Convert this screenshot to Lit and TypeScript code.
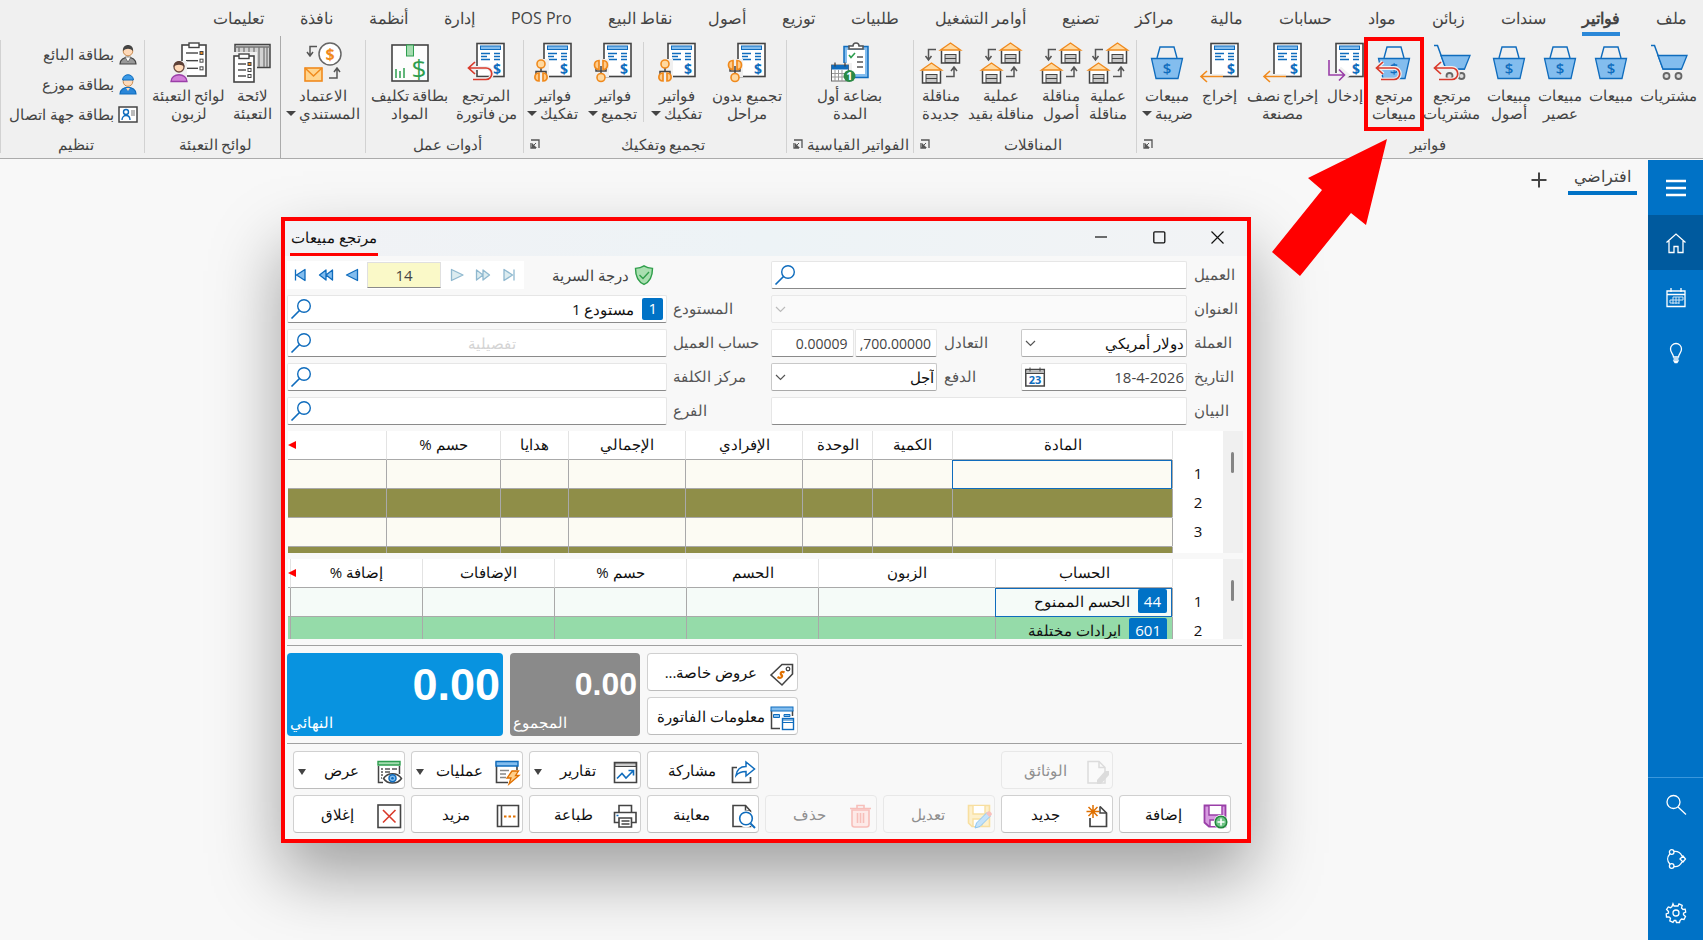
import { LitElement, html, svg, css, nothing, TemplateResult } from "lit";
import { customElement } from "lit/decorators.js";
import { classMap } from "lit/directives/class-map.js";

type Art = ReturnType<typeof svg>;

const BLUE = "#0f6cbd";
const SKY = "#83bdee";
const INK = "#444444";
const GREEN = "#2e9e4f";
const ORANGE = "#f08a1d";
const RED = "#d93a2b";
const PURPLE = "#9a3fa8";

const basket = svg`
  <path d="M10 16 13 5h14l3 11" fill="none" stroke="${BLUE}" stroke-width="1.4"/>
  <path d="M4.500 16.500h31l-4.500 20h-22z" fill="${SKY}" stroke="${BLUE}" stroke-width="1.300"/>
  <text x="20" y="32" font-size="15" font-weight="600" text-anchor="middle" fill="${BLUE}">$</text>`;

const cart = svg`
  <path d="M2 3.500h3.500L14 27h19" fill="none" stroke="${BLUE}" stroke-width="1.500"/>
  <path d="M9 13.500h29L32.500 27H14z" fill="${SKY}" stroke="${BLUE}" stroke-width="1.300"/>
  <circle cx="17.500" cy="34" r="3" fill="#ddd" stroke="#666" stroke-width="1.800"/>
  <circle cx="29.500" cy="34" r="3" fill="#ddd" stroke="#666" stroke-width="1.800"/>`;

const redReturn = svg`
  <path d="M3 26h17a5.500 5.500 0 0 1 0 11.500H7M9 20l-6.500 6L9 32" fill="none" stroke="#f0f0f0" stroke-width="4"/>
  <path d="M3 26h17a5.500 5.500 0 0 1 0 11.500H7M9 20l-6.500 6L9 32" fill="none" stroke="${RED}" stroke-width="1.700"/>`;

const bill = svg`
  <rect x="11" y="1.500" width="27" height="33" fill="#fff" stroke="${INK}" stroke-width="1.600"/>
  <rect x="14.500" y="4" width="20" height="3.500" fill="${SKY}" stroke="${BLUE}"/>
  <path d="M15 11.500h9M15 14.500h6M15 17.500h9M28 11.500h6M28 14.500h6M28 17.500h6" stroke="${BLUE}" stroke-width="1.500"/>
  <text x="31" y="32" font-size="14" font-weight="700" text-anchor="middle" fill="${BLUE}">$</text>`;

const outArrow = svg`
  <path d="M0 35h23M8 29l-6 6 6 6" fill="none" stroke="#f0f0f0" stroke-width="6"/>
  <path d="M1 34.500h22M7 29l-6 5.500 6 5.500" fill="none" stroke="${ORANGE}" stroke-width="1.600"/>`;

const inArrow = svg`
  <path d="M3 17v17h18M14 27l7 6-7 6" fill="none" stroke="#f0f0f0" stroke-width="6"/>
  <path d="M4 18v15h15M14 27.500l5.500 5.500-5.500 5.500" fill="none" stroke="${PURPLE}" stroke-width="1.600"/>`;

const house = (x: number, y: number) => svg`
  <path d="M${x + 1} ${y + 8.500}v12.500h18V${y + 8.500}" fill="#fff" stroke="${INK}" stroke-width="1.500"/>
  <path d="M${x} ${y + 8}l10-7 10 7z" fill="#ffd9a0" stroke="${ORANGE}" stroke-width="1.400"/>
  <rect x="${x + 4.500}" y="${y + 12.500}" width="11" height="8" fill="#c8c8c8" stroke="${INK}"/>
  <path d="M${x + 4.500} ${y + 16.500}h11" stroke="${INK}"/>`;

const transfer = svg`
  ${house(19.500, 0)}${house(0.500, 20)}
  <path d="M15 7.500H7.500V17M4.500 14l3 4 3-4M25 34.500h8V26M30 29l3-4 3 4" fill="none" stroke="#555" stroke-width="1.500"/>`;

const merge = svg`
  <path d="M2 17h14v18H2z" fill="#f0f0f0"/>
  <path d="M8 24v9M3 25v4h10v-4" fill="none" stroke="${INK}" stroke-width="1.500"/>
  <path d="M6 18.500v9c-6 0-6-9 0-9zM10 18.500v9c6 0 6-9 0-9z" fill="#ffcb8a" stroke="${ORANGE}" stroke-width="1.700"/>
  <circle cx="8" cy="35.500" r="4" fill="#ffd9a0" stroke="${ORANGE}" stroke-width="1.600"/>`;

const split = svg`
  <path d="M2 17h14v20H2z" fill="#f0f0f0"/>
  <path d="M8 26v4M3 32v-2.500h10V32" fill="none" stroke="${INK}" stroke-width="1.500"/>
  <circle cx="8" cy="22" r="4" fill="#ffd9a0" stroke="${ORANGE}" stroke-width="1.600"/>
  <path d="M6 31v8c-6 0-5-8 0-8zM10 31v8c6 0 5-8 0-8z" fill="#ffcb8a" stroke="${ORANGE}" stroke-width="1.700"/>`;

const clipCalendar = svg`
  <rect x="14" y="4.500" width="24" height="31" fill="${SKY}" stroke="${BLUE}" stroke-width="1.500"/>
  <rect x="17" y="8" width="18" height="24" fill="#fff"/>
  <path d="M19 7V4h4a3 3 0 0 1 6 0h4v3z" fill="#fff" stroke="#555" stroke-width="1.500"/>
  <path d="m19 13 2 2.500 4-4.500" fill="none" stroke="${GREEN}" stroke-width="1.600"/>
  <path d="M27 15h6M27 20h6M27 25h6" stroke="#555" stroke-width="1.400"/>
  <path d="M0 21h22v19H0z" fill="#f0f0f0"/>
  <rect x="1.500" y="23" width="17" height="16" fill="#fff" stroke="#666"/>
  <rect x="1.500" y="23" width="17" height="4.500" fill="${BLUE}"/>
  <path d="M5 20.500v4M15 20.500v4" stroke="${INK}" stroke-width="1.300"/>
  <path d="M5 28v11M8.500 28v11M12 28v11M2 31.500h16M2 35h16" stroke="#999"/>
  <circle cx="19.500" cy="34" r="6" fill="#2b8a46"/>
  <text x="19.500" y="38" font-size="11" font-weight="700" text-anchor="middle" fill="#fff">1</text>`;

const costCard = svg`
  <rect x="2" y="3" width="36" height="36" fill="#fdfdfd" stroke="${INK}" stroke-width="1.600"/>
  <rect x="16.500" y="3" width="7" height="11" fill="#a5dcb0" stroke="${GREEN}"/>
  <path d="M6 27v9M10 29v7M14 26v10" stroke="${GREEN}" stroke-width="1.500"/>
  <text x="29" y="36" font-size="26" text-anchor="middle" fill="${GREEN}">$</text>`;

const credit = svg`
  <circle cx="27" cy="12" r="11" fill="#fff" stroke="#666" stroke-width="1.500"/>
  <text x="27" y="18" font-size="16" font-weight="700" text-anchor="middle" fill="${ORANGE}">$</text>
  <path d="M14 4.500H7V13M4 10l3 4 3-4M26 36h8v-9M31 30l3-4 3 4" fill="none" stroke="#555" stroke-width="1.500"/>
  <rect x="2" y="26" width="17" height="13" fill="#ffd58f" stroke="${ORANGE}" stroke-width="1.600"/>
  <path d="m2 26 8.500 8 8.500-8" fill="none" stroke="${ORANGE}" stroke-width="1.500"/>`;

const clipboard = (x: number, y: number, w: number, h: number) => svg`
  <rect x="${x}" y="${y + 2}" width="${w}" height="${h}" fill="#fff" stroke="${INK}" stroke-width="1.600"/>
  <rect x="${x + w / 2 - 5}" y="${y}" width="10" height="4.500" fill="#fff" stroke="${INK}" stroke-width="1.400"/>
  ${[0, 1, 2].map((i) => {
    const ly = y + 10 + (i * (h - 8)) / 3;
    return svg`<path d="M${x + 4} ${ly}h${w - 12}" stroke="${INK}" stroke-width="1.400"/>
      <rect x="${x + w - 6}" y="${ly - 1.500}" width="3" height="3" fill="${i ? "#fff" : ORANGE}" stroke="${INK}"/>`;
  })}`;

const packList = svg`
  <rect x="3" y="2.500" width="35" height="23" fill="#d2d2d2" stroke="${INK}" stroke-width="1.500"/>
  <path d="M3 5h35M7 5v20M12 5v20M17 5v20M22 5v20M27 5v20M32 5v20M35 5v20" stroke="#777" stroke-width="1.300"/>
  <path d="M0 10h25v30H0z" fill="#f0f0f0"/>
  ${clipboard(2, 12, 20, 26)}`;

const packPerson = svg`
  ${clipboard(13, 1, 24, 31)}
  <path d="M0 19h18v21H0z" fill="#f0f0f0"/>
  <circle cx="10" cy="25" r="5" fill="#ffd9b8" stroke="#6d4c41" stroke-width="1.300"/>
  <path d="M4.500 25c0-8 11-8 11 0-3-3-8-3-11 0z" fill="#5d4037"/>
  <path d="M2 39.500c0-9 16-9 16 0z" fill="#d27fd8" stroke="${PURPLE}" stroke-width="1.400"/>`;

const seller = svg`
  <path d="M2 20c0-9 16-9 16 0z" fill="#999" stroke="${INK}" stroke-width="1.200"/>
  <path d="m7 13 3 5 3-5z" fill="#fff" stroke="${INK}" stroke-width=".6"/>
  <circle cx="10" cy="7" r="4.800" fill="#ffd9b8" stroke="#c98b50"/>
  <path d="M5 7C4-1 16-1 15 7c-3-3-7-3-10 0z" fill="#444"/>`;

const courier = svg`
  <path d="M2 20c0-9 16-9 16 0z" fill="#2a86d8" stroke="${BLUE}" stroke-width="1.200"/>
  <circle cx="10" cy="7.500" r="4.800" fill="#ffd9b8" stroke="#c98b50"/>
  <path d="M4.500 6C5-1 15-1 15.500 6z" fill="#3c9be8" stroke="${BLUE}"/>
  <path d="m8 14 2 3 2-3z" fill="#ffd9b8"/>`;

const contact = svg`
  <rect x="1" y="3" width="18" height="15" fill="#fff" stroke="${INK}" stroke-width="1.500"/>
  <circle cx="8" cy="8" r="2.500" fill="none" stroke="${BLUE}" stroke-width="1.400"/>
  <path d="M4 16c0-6 8-6 8 0" fill="none" stroke="${BLUE}" stroke-width="1.400"/>
  <path d="M13 6h4v6h-4z" fill="#bbb"/>`;

const pic = (art: Art, size: number, cls = "") =>
  html`<svg class=${cls} width=${size} height=${size} viewBox="0 0 ${size} ${size}" aria-hidden="true">${art}</svg>`;

interface Tool {
  icon: Art;
  lines: string[];
  menu?: boolean;
  marked?: boolean;
  split?: boolean;
}
interface Group {
  key: string;
  label: string;
  launcher?: boolean;
  tools: Tool[];
}

const TABS = ["ملف", "فواتير", "سندات", "زبائن", "مواد", "حسابات", "مالية", "مراكز", "تصنيع", "أوامر التشغيل",
  "طلبيات", "توزيع", "أصول", "نقاط البيع", "POS Pro", "إدارة", "أنظمة", "نافذة", "تعليمات"];

const GROUPS: Group[] = [
  { key: "invoices", label: "فواتير", launcher: true, tools: [
    { icon: cart, lines: ["مشتريات"] },
    { icon: basket, lines: ["مبيعات"] },
    { icon: basket, lines: ["مبيعات", "عصير"] },
    { icon: basket, lines: ["مبيعات", "أصول"] },
    { icon: svg`${cart}${redReturn}`, lines: ["مرتجع", "مشتريات"] },
    { icon: svg`${basket}${redReturn}`, lines: ["مرتجع", "مبيعات"], marked: true },
    { icon: svg`${bill}${inArrow}`, lines: ["إدخال"] },
    { icon: svg`${bill}${outArrow}`, lines: ["إخراج نصف", "مصنعة"] },
    { icon: svg`${bill}${outArrow}`, lines: ["إخراج"] },
    { icon: basket, lines: ["مبيعات", "ضريبة"], menu: true },
  ] },
  { key: "transfers", label: "المناقلات", launcher: true, tools: [
    { icon: transfer, lines: ["عملية", "مناقلة"] },
    { icon: transfer, lines: ["مناقلة", "أصول"] },
    { icon: transfer, lines: ["عملية", "مناقلة بقيد"] },
    { icon: transfer, lines: ["مناقلة", "جديدة"] },
  ] },
  { key: "standard", label: "الفواتير القياسية", launcher: true, tools: [
    { icon: clipCalendar, lines: ["بضاعة أول", "المدة"] },
  ] },
  { key: "assembly", label: "تجميع وتفكيك", launcher: true, tools: [
    { icon: svg`${bill}${merge}`, lines: ["تجميع بدون", "مراحل"] },
    { icon: svg`${bill}${split}`, lines: ["فواتير", "تفكيك"], menu: true },
    { icon: svg`${bill}${merge}`, lines: ["فواتير", "تجميع"], menu: true, split: true },
    { icon: svg`${bill}${split}`, lines: ["فواتير", "تفكيك"], menu: true },
  ] },
  { key: "work", label: "أدوات عمل", tools: [
    { icon: svg`${bill}${redReturn}`, lines: ["المرتجع", "من فاتورة"] },
    { icon: costCard, lines: ["بطاقة تكليف", "المواد"] },
  ] },
  { key: "credit", label: "", tools: [
    { icon: credit, lines: ["الاعتماد", "المستندي"], menu: true },
  ] },
  { key: "packing", label: "لوائح التعبئة", tools: [
    { icon: packList, lines: ["لائحة", "التعبئة"] },
    { icon: packPerson, lines: ["لوائح التعبئة", "لزبون"] },
  ] },
];

const CARDS = [
  { icon: seller, text: "بطاقة البائع" },
  { icon: courier, text: "بطاقة موزع" },
  { icon: contact, text: "بطاقة جهة اتصال" },
];

const shared = css`
  * { box-sizing: border-box; }
  button { font: inherit; color: inherit; background: none; border: 0; padding: 0; margin: 0; white-space: nowrap; }
  input, select { font: inherit; color: inherit; min-width: 0; margin: 0; }
  svg { display: block; flex: none; overflow: visible; }
  svg text { font-family: "Open Sans", sans-serif; }
`;

@customElement("ribbon-bar")
class RibbonBar extends LitElement {
  static styles = [shared, css`
    :host { display: block; background: #f0f0f0; border-bottom: 1px solid #ababab; color: #444; }
    .tabs { display: flex; gap: 36px; padding: 0 16px; height: 36px; }
    .tab { display: flex; align-items: flex-start; height: 36px; padding-top: 6px; font-size: 16px; line-height: 24px; border-bottom: 4px solid transparent; }
    .tab.active { font-weight: 700; border-bottom-color: #2b88d8; }
    .groups { display: grid; grid-template-columns: 567fr 223fr 127fr 263fr 158fr 85fr 136fr 144fr; height: 122px; }
    .group { display: flex; flex-direction: column; min-width: 0; position: relative; padding-top: 6px; }
    .group::after { content: ""; position: absolute; left: 0; top: 4px; bottom: 5px; width: 1px; background: #d2d2d2; }
    .group.credit::after { top: 0; bottom: 0; background: #ababab; }
    .group.contacts { padding-top: 4px; }
    .tools { flex: 1; display: flex; justify-content: center; gap: 7px; align-items: flex-start; }
    .assembly .tools { gap: 10px; }
    .tool { position: relative; display: flex; flex-direction: column; align-items: center; gap: 4px; min-width: 40px;
      font-size: 15px; line-height: 18px; }
    .lines { display: block; text-align: center; }
    .line { display: block; }
    .caret { display: inline-block; border: 5px solid transparent; border-top: 5px solid #444; border-bottom: 0;
      margin-right: 3px; vertical-align: 3px; }
    .tool.marked::after { content: ""; position: absolute; inset: -5px -8px -9px; border: 4px solid #f00; }
    .tool.split { margin-right: 4px; }
    .tool.split::before { content: ""; position: absolute; right: -7px; top: 0; bottom: 0; width: 1px; background: #d2d2d2; }
    .foot { display: flex; align-items: center; height: 26px; font-size: 15px; padding: 0 0 2px 7px; }
    .name { flex: 1; text-align: center; white-space: nowrap; }
    .cards { flex: 1; display: flex; flex-direction: column; padding-right: 6px; font-size: 15px; }
    .card { display: flex; align-items: center; gap: 4px; height: 28px; margin-bottom: 2px; }
  `];

  render() {
    return html`
      <nav class="tabs">
        ${TABS.map((t, i) => html`<button class=${classMap({ tab: true, active: i === 1 })}>${t}</button>`)}
      </nav>
      <div class="groups">
        ${GROUPS.map((g) => html`
          <section class="group ${g.key}">
            <div class="tools">${g.tools.map((t) => this.tool(t))}</div>
            <div class="foot">
              <span class="name">${g.label}</span>
              ${g.launcher ? html`<button aria-label="خيارات">${pic(svg`<path d="M1 1h8v8M1 4v5h5" fill="none" stroke="#555" stroke-width="1.300"/><path d="M2 9V4l5 5z" fill="#555"/><path d="m2 8 4-4" stroke="#555"/>`, 10)}</button>` : nothing}
            </div>
          </section>`)}
        <section class="group contacts">
          <div class="cards">
            ${CARDS.map((c) => html`<button class="card">${pic(c.icon, 20)}<span>${c.text}</span></button>`)}
          </div>
          <div class="foot"><span class="name">تنظيم</span></div>
        </section>
      </div>`;
  }

  private tool(t: Tool) {
    const last = t.lines.length - 1;
    return html`<button class=${classMap({ tool: true, marked: !!t.marked, split: !!t.split })}>
      ${pic(t.icon, 40)}
      <span class="lines">${t.lines.map((l, i) => html`<span class="line">${l}${t.menu && i === last ? html`<i class="caret"></i>` : nothing}</span>`)}</span>
    </button>`;
  }
}

const line = (d: string) => svg`<path d=${d} fill="none" stroke="#fff" stroke-width="1.300"/>`;

@customElement("side-rail")
class SideRail extends LitElement {
  static styles = [shared, css`
    :host { display: flex; flex-direction: column; justify-content: space-between; width: 55px; flex: none; background: #0072c6; }
    .item { display: grid; place-items: center; width: 55px; height: 55px; }
    .item.on { background: #005a9e; }
    .end { border-top: 1px solid #3a97dc; }
    .end .item { height: 54px; }
  `];

  render() {
    const item = (label: string, art: Art, on = false) =>
      html`<button class=${classMap({ item: true, on })} aria-label=${label}>${pic(art, 20)}</button>`;
    return html`
      <div>
        ${item("القائمة", svg`<path d="M0 3h20M0 10h20M0 17h20" stroke="#fff" stroke-width="2.400"/>`)}
        ${item("الرئيسية", line("M.5 9.500 10 1l9.500 8.500M3 8v11.500h5v-6h4v6h5V8"), true)}
        ${item("التقويم", svg`${line("M1 3h18v15.500H1zM1 6.500h18M5 0v4M15 0v4")}<path d="M7 9h10M4 12h13M4 15h9M7 9v7M10 9v7M13 9v7M17 9v3M4 12v3" stroke="#cfe4f5" fill="none"/>`)}
        ${item("تلميحات", line("M7.500 14c0-3-3-4-3-8a5.500 5.500 0 0 1 11 0c0 4-3 5-3 8zM7.500 16h5M8 18h4l-1 1.500H9z"))}
      </div>
      <div class="end">
        ${item("بحث", line("M14 7A6.500 6.500 0 1 1 1 7a6.500 6.500 0 0 1 13 0zM12 12l8 7.500"))}
        ${item("مشاركة", line("M8 3a2.300 2.300 0 1 1-4.600 0A2.300 2.300 0 0 1 8 3zM8 17a2.300 2.300 0 1 1-4.600 0A2.300 2.300 0 0 1 8 17zM14 10l3-3 2.500 3-2.500 3zM3.800 5c-2.800 3-2.800 7 0 10M8 2.500c4-.5 6.500 1.500 8 4.500M8 17.500c4 .5 6.500-1.500 8-4.500"))}
        ${item("إعدادات", line("M7 .8 8 3h4l1-2.200 3.200 1.500L15.500 5 17 6.500l2.200-.3.5 3-2.200 1 0 1.500 2 1.800-1.500 3-2.500-.5L14 17.500l-.5 2h-3L9.800 17.500H8.200L7 19.300l-3.200-1.500.7-2.500L3 13.800l-2.500.2-.3-3L2.500 10V8.500L.6 6.500 2.300 4l2.200.7L6 3.500zM13 10a3 3 0 1 1-6 0 3 3 0 0 1 6 0z"))}
      </div>`;
  }
}

const lens = pic(svg`<circle cx="13" cy="7" r="6.300" fill="none" stroke="${BLUE}" stroke-width="1.400"/><path d="M8.500 11.500.500 19.500" stroke="${BLUE}" stroke-width="1.700"/>`, 20);
const chevron = pic(svg`<path d="m1 3 4.500 4.500L10 3" fill="none" stroke="currentColor" stroke-width="1.200"/>`, 11, "chev");

const nav = (d: string, off = false) => html`<button aria-label="تنقل" ?disabled=${off}>${pic(svg`<path d=${d} fill="${off ? "#dcecf0" : SKY}" stroke="${off ? "#8fb8cf" : BLUE}" stroke-width="1.300" stroke-linejoin="round"/>`, 16)}</button>`;

const page = "M3 1.500h11l6 6V23H3z";
const ART: Record<string, Art> = {
  tag: svg`<path d="M1 13 12 2.500h10.500V12L12 23z" fill="#fff" stroke="${INK}" stroke-width="1.600"/><circle cx="18" cy="7" r="1.800" fill="none" stroke="${INK}" stroke-width="1.300"/><path d="M14.500 10.500c-3-2-5 1-3 2.500s-1 4-4 2" fill="none" stroke="#e07000" stroke-width="2.200"/>`,
  info: svg`<path d="M1.500 4v18.500H10M22.500 4v6" fill="none" stroke="${INK}" stroke-width="1.500"/><rect x="1" y="1" width="22" height="4" fill="${SKY}" stroke="${BLUE}"/><path d="M3.500 8.500h6v3h-6zM14 8.500h6v2h-6z" fill="${SKY}" stroke="${BLUE}"/><rect x="12.500" y="12.500" width="11" height="11" fill="#fff" stroke="${BLUE}" stroke-width="1.400"/><path d="M12.500 14h11M12.500 16.500h11" stroke="${BLUE}" stroke-width="1.200"/>`,
  docs: svg`<path d=${page} fill="#fafafa" stroke="#dcdcdc" stroke-width="1.500"/><path d="M14 1.500v6h6" fill="none" stroke="#dcdcdc" stroke-width="1.500"/><path d="m12 20 8-9h4v4l-8 9h-4z" fill="#dcdcdc"/>`,
  save: svg`<path d="M1.500 1.500h21v21H6l-4.500-4z" fill="#d79be0" stroke="${PURPLE}" stroke-width="1.800"/><path d="M6 2v9h13V2" fill="#fff" stroke="${PURPLE}" stroke-width="1.400"/><path d="M7 22v-6h8v6" fill="#fff" stroke="${PURPLE}" stroke-width="1.400"/><circle cx="18" cy="18" r="7.200" fill="#fff"/><circle cx="18" cy="18" r="5.800" fill="#6fc486" stroke="#23863d" stroke-width="1.500"/><path d="M18 14.500v7M14.500 18h7" stroke="#fff" stroke-width="1.600"/>`,
  fresh: svg`<path d="M5 14v8.500h16.500V9L15 2.500" fill="#fff" stroke="${INK}" stroke-width="1.700"/><path d="M15 2.500V9h6.500" fill="none" stroke="${INK}" stroke-width="1.500"/><path d="M8 1v13M1.500 7.500h13M3.500 3l9 9M12.500 3l-9 9" stroke="#e07000" stroke-width="1.500"/>`,
  edit: svg`<path d="M1.500 1.500h21v21H5l-3.500-3.500z" fill="#fdf0cc" stroke="#f8dfa0" stroke-width="1.600"/><path d="M6 2v8h12V2M6 22v-7h9v7" fill="#fff" stroke="#f8dfa0" stroke-width="1.400"/><path d="m8 24 1.500-5L20 8.500l3.500 3.500L13 22.500z" fill="#c4e2fa" stroke="#8cc6f2"/><path d="m19 9.500 2-2c1.500-1.500 5 2 3.500 3.500l-2 2z" fill="#f8c0bc"/>`,
  bin: svg`<path d="M3 6h17v14.500a2.500 2.500 0 0 1-2.500 2.500h-12A2.500 2.500 0 0 1 3 20.500z" fill="#fdeae8" stroke="#f7bfba" stroke-width="1.600"/><path d="M1 4.500h21M8 4V1.500h7V4M8.500 9v10M11.500 9v10M14.500 9v10" fill="none" stroke="#f7bfba" stroke-width="1.600"/>`,
  preview: svg`<path d="M2 1.500h12.500L19.500 7v15.500H2z" fill="#fff" stroke="${INK}" stroke-width="1.600"/><path d="M14.500 1.500V7h5" fill="none" stroke="${INK}" stroke-width="1.500"/><circle cx="15" cy="15" r="8.500" fill="#fff"/><circle cx="15" cy="14.500" r="6.300" fill="#fff" stroke="${BLUE}" stroke-width="1.600"/><path d="m19.500 19.500 4.500 4.500" stroke="${BLUE}" stroke-width="2"/>`,
  print: svg`<path d="M6 8V1.500h12.500V8" fill="#fff" stroke="${INK}" stroke-width="1.600"/><path d="M1.500 8.500h21.500v10H1.500z" fill="#fff" stroke="${INK}" stroke-width="1.600"/><path d="M3.500 11.500h2" stroke="${BLUE}" stroke-width="1.500"/><path d="M6 14h12.500v9H6z" fill="#fff" stroke="${INK}" stroke-width="1.600"/><path d="M8.500 17h8M8.500 20h8" stroke="${INK}" stroke-width="1.300"/>`,
  share: svg`<path d="M6 7.500H1.500v15h18V17" fill="none" stroke="${INK}" stroke-width="1.700"/><path d="M5 15.500c1-7 5-9 10-9V2l8.500 7-8.500 7v-4.500c-4 0-7 .5-10 4z" fill="#fff" stroke="${BLUE}" stroke-width="1.500"/>`,
  chart: svg`<path d="M1.500 2.500h22v20h-22z" fill="#fff" stroke="${INK}" stroke-width="1.600"/><path d="M2 3h21v3.500H2z" fill="#ccc" stroke="${INK}"/><path d="m4 18.500 5-5 4 4.500 7.500-7.500M15.500 10.500h5v5" fill="none" stroke="${BLUE}" stroke-width="1.600"/>`,
  bolt: svg`<path d="M1.500 2v20.500H13M22 6v4" fill="none" stroke="${INK}" stroke-width="1.600"/><path d="M1 1.500h22v4.500H1z" fill="${SKY}" stroke="${BLUE}" stroke-width="1.400"/><path d="M5 10.500h9M5 14h6M5 17.500h6" stroke="#888" stroke-width="1.300"/><path d="M17 11h6.500l-3 4.500H24L14 24l2-6h-4z" fill="#ffcf8a" stroke="#e07000" stroke-width="1.300"/>`,
  view: svg`<path d="M1.500 6v16.500H6M22.500 6v8" fill="none" stroke="${INK}" stroke-width="1.500"/><path d="M1 1.500h22V5H1z" fill="#a5dcb0" stroke="${GREEN}" stroke-width="1.400"/><path d="M4 9h2M8 9h5M15 9h5M4 12h2M8 12h5M4 15h2M4 18h1" stroke="#555" stroke-width="1.300"/><path d="M6.500 18.500c4-6.500 14-6.500 18 0-4 6-14 6-18 0z" fill="#fff" stroke="${INK}" stroke-width="1.500"/><circle cx="15.500" cy="18.300" r="3.500" fill="${SKY}" stroke="${BLUE}" stroke-width="1.500"/><circle cx="15.500" cy="18.300" r="1.300" fill="${BLUE}"/>`,
  more: svg`<path d="M2.500 1.500h21v21h-21zM6.500 1.500v21" fill="#fff" stroke="${INK}" stroke-width="1.600"/><path d="M9 12.500h2.500M13.500 12.500H16M18 12.500h2.500" stroke="#e07000" stroke-width="2.200"/>`,
  close: svg`<rect x="1" y="1" width="22.500" height="22.500" fill="#fff" stroke="${INK}" stroke-width="1.600"/><path d="m6 6 12.500 12.500M18.500 6 6 18.500" stroke="${RED}" stroke-width="1.600"/>`,
};

interface Action { icon: string; text: string; menu?: boolean; off?: boolean; }
const ACTIONS: (Action | null)[] = [
  null, { icon: "docs", text: "الوثائق", off: true }, null, null, { icon: "share", text: "مشاركة" },
  { icon: "chart", text: "تقارير", menu: true }, { icon: "bolt", text: "عمليات", menu: true }, { icon: "view", text: "عرض", menu: true },
  { icon: "save", text: "إضافة" }, { icon: "fresh", text: "جديد" }, { icon: "edit", text: "تعديل", off: true },
  { icon: "bin", text: "حذف", off: true }, { icon: "preview", text: "معاينة" }, { icon: "print", text: "طباعة" },
  { icon: "more", text: "مزيد" }, { icon: "close", text: "إغلاق" },
];

interface Row { no: string; code?: string; name?: string; }

@customElement("invoice-window")
class InvoiceWindow extends LitElement {
  static styles = [shared, css`
    :host { display: block; border: 4px solid #f00; background: #f8f8f8; font-size: 15px; color: #444; direction: rtl;
      box-shadow: 0 32px 64px rgba(0, 0, 0, .36); }
    .bar { display: flex; align-items: center; justify-content: space-between; height: 35px; padding: 0 23px 0 5px;
      background: linear-gradient(to right, #f1f2f5, #edf3f6 50%, #f2f3f5); color: #111; }
    .controls { display: flex; gap: 45px; margin-bottom: 3px; }
    .caption { margin: 0; font: inherit; height: 35px; line-height: 32px; padding: 0 1px; border-bottom: 3px solid #f00; }
    .form { display: grid; grid-template-columns: 476px 1fr; column-gap: 11px; padding: 5px 0 0 2px; }
    .side { display: grid; grid-auto-rows: 28px; row-gap: 6px; align-content: start; }
    .row { display: grid; grid-template-columns: 53px 416px; column-gap: 7px; align-items: center; }
    .row.wide { grid-template-columns: 87px 380px; column-gap: 6px; }
    .row.pair { grid-template-columns: 53px 166px 70px 1fr; column-gap: 7px; }
    .side label { text-align: left; white-space: nowrap; color: #555; padding-bottom: 2px; }
    .field { display: flex; align-items: center; height: 28px; background: #fff; border: 1px solid #e6e6e6;
      border-bottom-color: #8a8a8a; border-radius: 2px; padding: 0 2px 0 3px; min-width: 0; gap: 8px; }
    .field input { flex: 1; border: 0; outline: 0; background: none; padding: 0; height: 26px; text-align: right; }
    .field .dark { color: #111; }
    .field input::placeholder { color: #d4d4d4; opacity: 1; }
    .field .mid { text-align: center; }
    .field.flat { background: #fafafa; border-color: #e8e8e8; color: #aaa; }
    .field.box { border-color: #c8c8c8; border-bottom-color: #aaa; color: #111; }
    .field select { flex: 1; border: 0; outline: 0; appearance: none; background: none; padding: 0; height: 26px; opacity: 1; }
    .field .chev { color: #555; }
    .field.flat .chev { color: #bbb; }
    .rates { display: grid; grid-template-columns: 1fr 1fr; gap: 1px; font-size: 14px; }
    .rates .field { padding: 0 5px 0 1px; }
    .badge { display: inline-block; background: #0072c6; color: #fff; border-radius: 2px; text-align: center; line-height: 20px; height: 22px; padding: 0 6px; }
    .field .badge { margin-right: 1px; }
    .top { display: flex; align-items: center; justify-content: space-between; }
    .secrecy { display: flex; align-items: center; gap: 5px; color: #444; margin-right: 106px; }
    .pager { display: flex; align-items: center; background: #fff; height: 28px; padding-right: 2px; }
    .pager button { display: grid; place-items: center; width: 26px; height: 28px; }
    .pager input { width: 74px; height: 26px; margin: 0 3px 0 2px; text-align: center; background: #faf9c8; border: 1px solid #e0e0e0; border-bottom-color: #8a8a8a; padding: 0; }
    .sheet { position: relative; display: flex; background: #fff; margin: 6px 4px 0 3px; overflow: hidden; }
    .sheet.items { height: 122px; }
    .sheet.accounts { height: 80px; }
    .track { flex: none; width: 20px; background: #f0f0f0; padding: 21px 9px 0 8px; }
    .thumb { height: 21px; border-radius: 2px; background: #858585; }
    table { flex: 1; width: 100%; table-layout: fixed; border-collapse: separate; border-spacing: 0; color: #111; height: max-content; }
    th, td { height: 29px; padding: 0 5px 2px 0; border-left: 1px solid #a9a9a9; border-bottom: 1px solid #a9a9a9; font-weight: 400; text-align: right; overflow: hidden; white-space: nowrap; line-height: 24px; }
    thead th { padding: 0 0 2px; text-align: center; border-left-color: #e3e3e3; }
    thead th:first-child, tbody th { border-bottom-color: transparent; text-align: center; padding: 0 0 3px; }
    th:last-child, td:last-child { border-left: 0; }
    .items td { background: #fcfbf3; }
    .items tr:nth-child(even) td { background: #8f8e48; }
    .accounts td { background: #f5fbf8; }
    .accounts tr:nth-child(even) td { background: #95dba9; }
    td.sel { outline: 1px solid #0f6cbd; outline-offset: -1px; }
    td .badge { height: 24px; line-height: 24px; margin-left: 8px; vertical-align: top; }
    .flag { position: absolute; left: 0; top: 10px; border: 4px solid transparent; border-right: 8px solid #f00; border-left: 0; }
    .totals { display: flex; justify-content: flex-end; gap: 7px; margin: 6px 5px 0 2px; padding: 7px 0; border-top: 1px solid #a0a0a0; border-bottom: 1px solid #a0a0a0; min-height: 99px; }
    .extras { display: grid; gap: 6px; width: 151px; align-content: start; }
    .total { display: flex; flex-direction: column; justify-content: space-between; width: 130px; border-radius: 4px; background: #8a8a8a; color: #fff; padding: 8px 3px 2px; }
    .total.final { width: 216px; background: #0893e0; }
    .amount { font: 700 32px/46px "Liberation Sans", sans-serif; direction: ltr; text-align: right; }
    .final .amount { font-size: 45px; line-height: 48px; }
    .total .what { direction: rtl; text-align: left; line-height: 24px; }
    .act { display: flex; align-items: center; height: 38px; width: 100%; padding: 0 3px 0 4px; background: #fff; border: 1px solid #d0d0d0; border-bottom-color: #bcbcbc; border-radius: 4px; color: #111; }
    .act .text { flex: 1; text-align: center; }
    .act svg { margin-top: 3px; }
    .act[disabled] { background: #f9f9f9; border-color: #e8e8e8; color: #8f8f8f; }
    .caret { border: 4px solid transparent; border-top: 6px solid #444; border-bottom: 0; margin-top: 3px; }
    .actions { display: grid; grid-template-columns: repeat(8, 1fr); gap: 6px; padding: 7px 16px 6px 8px; }
  `];

  render() {
    return html`
      <header class="bar">
        <div class="controls">
          <button aria-label="إغلاق النافذة">${pic(svg`<path d="m.5.5 12 12M12.500.5l-12 12" stroke="#111" stroke-width="1.200"/>`, 13)}</button>
          <button aria-label="تكبير">${pic(svg`<rect x=".8" y=".8" width="11" height="11" rx="1" fill="none" stroke="#111" stroke-width="1.300"/>`, 13)}</button>
          <button aria-label="تصغير">${pic(svg`<path d="M0 6h12" stroke="#111" stroke-width="1.200"/>`, 13)}</button>
        </div>
        <h2 class="caption">مرتجع مبيعات</h2>
      </header>
      <form class="form" @submit=${(e: Event) => e.preventDefault()}>
        <div class="side">
          <div class="row"><label for="client">العميل</label>
            <div class="field"><input id="client"><button aria-label="بحث">${lens}</button></div></div>
          <div class="row"><label for="address">العنوان</label>
            <div class="field flat"><select id="address" disabled></select>${chevron}</div></div>
          <div class="row pair"><label for="currency">العملة</label>
            <div class="field box"><select id="currency"><option>دولار أمريكي</option></select>${chevron}</div>
            <label for="rate">التعادل</label>
            <div class="rates">
              <div class="field"><input id="rate" dir="ltr" .value=${",700.00000"}></div>
              <div class="field"><input aria-label="معكوس التعادل" dir="ltr" .value=${"0.00009"}></div>
            </div></div>
          <div class="row pair"><label for="date">التاريخ</label>
            <div class="field"><input id="date" dir="ltr" .value=${"18-4-2026"}><button aria-label="اختيار التاريخ">${pic(svg`<rect x=".8" y="2.500" width="18.500" height="16.500" fill="#fff" stroke="${INK}" stroke-width="1.500"/><path d="M1.500 5h17" stroke="#bbb" stroke-width="3"/><path d="M1 6.500h18M5 .5v4M15 .5v4" stroke="${INK}"/><text x="10" y="17" font-size="11" font-weight="700" text-anchor="middle" fill="${BLUE}">23</text>`, 20)}</button></div>
            <label for="pay">الدفع</label>
            <div class="field box"><select id="pay"><option>آجل</option></select>${chevron}</div></div>
          <div class="row"><label for="note">البيان</label><div class="field"><input id="note"></div></div>
        </div>
        <div class="side">
          <div class="top">
            <span class="secrecy">${pic(svg`<path d="M10 .8c3 2 5.500 2.400 8.500 2.600 0 8-2 13-8.500 16C3.500 16.400 1.500 11.400 1.500 3.400 4.500 3.200 7 2.800 10 .8z" fill="#a9dfb0" stroke="#2f9e4a" stroke-width="1.400"/><path d="m5.500 10 3.500 3.500 6-6.500" fill="none" stroke="#2f9e4a" stroke-width="1.300"/>`, 20)}<span>درجة السرية</span></span>
            <div class="pager">
              ${nav("M3 2.500 11.500 8 3 13.500zM13 2.500v11", true)}${nav("M1.500 3 8 8l-6.500 5zM8 3l6.500 5L8 13z", true)}${nav("M2.500 2.500 14 8 2.500 13.500z", true)}
              <input aria-label="رقم الفاتورة" .value=${"14"}>
              ${nav("M13.500 2.500 2.500 8l11 5.500z")}${nav("M14.500 3 8 8l6.500 5zM8 3 1.500 8 8 13z")}${nav("M13 2.500 4.500 8l8.500 5.500zM3.500 2.500v11")}
            </div>
          </div>
          <div class="row wide"><label for="store">المستودع</label>
            <div class="field"><span class="badge">1</span><input id="store" class="dark" .value=${"مستودع 1"}><button aria-label="بحث">${lens}</button></div></div>
          <div class="row wide"><label for="account">حساب العميل</label>
            <div class="field"><input id="account" class="mid" placeholder="تفصيلية"><button aria-label="بحث">${lens}</button></div></div>
          <div class="row wide"><label for="cost">مركز الكلفة</label>
            <div class="field"><input id="cost"><button aria-label="بحث">${lens}</button></div></div>
          <div class="row wide"><label for="branch">الفرع</label>
            <div class="field"><input id="branch"><button aria-label="بحث">${lens}</button></div></div>
        </div>
      </form>
      ${this.sheet("items", [51, 220, 80, 70, 117, 117, 68, 114, 98],
        ["المادة", "الكمية", "الوحدة", "الإفرادي", "الإجمالي", "هدايا", "حسم %", ""],
        [{ no: "1" }, { no: "2" }, { no: "3" }, { no: "" }])}
      ${this.sheet("accounts", [51, 177, 177, 132, 132, 132, 132, 2],
        ["الحساب", "الزبون", "الحسم", "حسم %", "الإضافات", "إضافة %", ""],
        [{ no: "1", code: "44", name: "الحسم الممنوح" }, { no: "2", code: "601", name: "ايرادات مختلفة" }])}
      <div class="totals">
        <div class="extras">${this.action({ icon: "tag", text: "عروض خاصة..." })}${this.action({ icon: "info", text: "معلومات الفاتورة" })}</div>
        <div class="total"><span class="amount">0.00</span><span class="what">المجموع</span></div>
        <div class="total final"><span class="amount">0.00</span><span class="what">النهائي</span></div>
      </div>
      <div class="actions">${ACTIONS.map((a) => (a ? this.action(a) : html`<span></span>`))}</div>`;
  }

  private action(a: Action) {
    return html`<button class="act" ?disabled=${!!a.off}>${pic(ART[a.icon], 24)}<span class="text">${a.text}</span>${a.menu ? html`<i class="caret"></i>` : nothing}</button>`;
  }

  private sheet(kind: string, widths: number[], heads: string[], rows: Row[]): TemplateResult {
    return html`<div class="sheet ${kind}">
      <div class="track"><div class="thumb"></div></div>
      <table>
        <colgroup>${widths.map((w) => html`<col style="width:${w}px">`)}</colgroup>
        <thead><tr><th></th>${heads.map((h) => html`<th scope="col">${h}</th>`)}</tr></thead>
        <tbody>${rows.map((r, i) => html`<tr><th scope="row">${r.no}</th>${heads.map((_, c) => html`<td class=${classMap({ sel: i === 0 && c === 0 })}>${r.code && c === 0 ? html`<span class="badge">${r.code}</span>${r.name}` : nothing}</td>`)}</tr>`)}</tbody>
      </table>
      <i class="flag"></i>
    </div>`;
  }
}

@customElement("app-root")
class AppRoot extends LitElement {
  static styles = [shared, css`
    :host { display: block; font-family: "Open Sans", sans-serif; direction: rtl; color: #444; }
    .app { position: relative; display: flex; flex-direction: column; min-height: 100vh; background: #f8f8f8; overflow: hidden; }
    .body { flex: 1; display: flex; padding-top: 1px; }
    .desk { position: relative; flex: 1; }
    .views { display: flex; align-items: center; gap: 21px; padding-right: 11px; height: 35px; }
    .view { height: 35px; padding: 0 6px; font-size: 16px; font-weight: 500; line-height: 28px; border-bottom: 4px solid #0072c6; }
    .window { position: absolute; left: 281px; top: 57px; width: 970px; }
    .pointer { position: absolute; right: 316px; top: 139px; }
  `];

  render() {
    return html`<div class="app">
      <ribbon-bar></ribbon-bar>
      <div class="body">
        <side-rail></side-rail>
        <main class="desk">
          <div class="views">
            <button class="view">افتراضي</button>
            <button aria-label="إضافة عرض">${pic(svg`<path d="M8 2.500v15M.5 10h15" stroke="#444" stroke-width="2"/>`, 16)}</button>
          </div>
          <invoice-window class="window"></invoice-window>
        </main>
      </div>
      <svg class="pointer" width="115" height="137" viewBox="0 0 115 137" aria-hidden="true">
        <path d="M115 0 36 39l14 12L0 113l28 24 51-63 15 12z" fill="#f00"/>
      </svg>
    </div>`;
  }
}
